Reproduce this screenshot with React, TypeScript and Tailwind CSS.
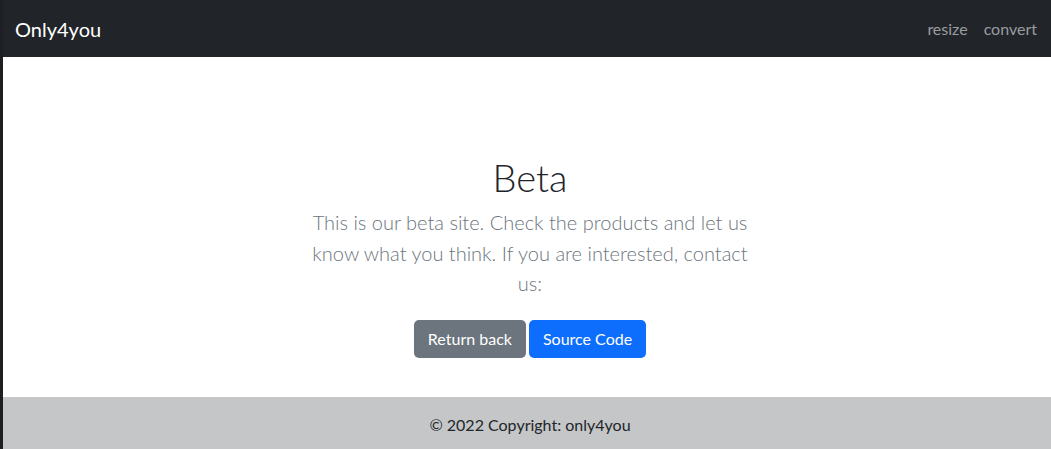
import React from 'react';

const font = "font-['Lato','Liberation_Sans',sans-serif]";

export default function App() {
  return (
    <div className={`${font} min-h-screen flex flex-col border-l-[3px] border-[#1d1f23] bg-white`}>
      {/* Navbar */}
      <nav className="h-[57px] bg-[#212529] flex items-center pl-[12px] pr-[14px] shrink-0">
        <a className="text-white text-[20px] leading-none">Only4you</a>
        <ul className="ml-auto flex items-center gap-[16px] text-[16px] text-[#9a9c9f]">
          <li>resize</li>
          <li>convert</li>
        </ul>
      </nav>

      {/* Hero */}
      <main className="h-[340px] flex flex-col items-center pt-[97px] pl-[6px] text-center">
        <h1 className="text-[38px] leading-[46px] font-light text-[#212529]">Beta</h1>
        <p className="mt-[7px] max-w-[456px] text-[20px] leading-[30.5px] font-light text-[#6c757d]">
          This is our beta site. Check the products and let us know what you think. If you are interested, contact us:
        </p>
        <div className="mt-[21px] flex gap-[3px]">
          <button className="h-[38px] px-[14px] rounded-[5px] bg-[#6c757d] text-white text-[16px]">Return back</button>
          <button className="h-[38px] px-[14px] rounded-[5px] bg-[#0d6efd] text-white text-[16px]">Source Code</button>
        </div>
      </main>

      {/* Footer */}
      <footer className="bg-[#c5c6c8] text-center text-[16px] text-[#212529] py-[16px] pl-[6px] leading-[24px]">
        © 2022 Copyright: only4you
      </footer>
    </div>
  );
}
